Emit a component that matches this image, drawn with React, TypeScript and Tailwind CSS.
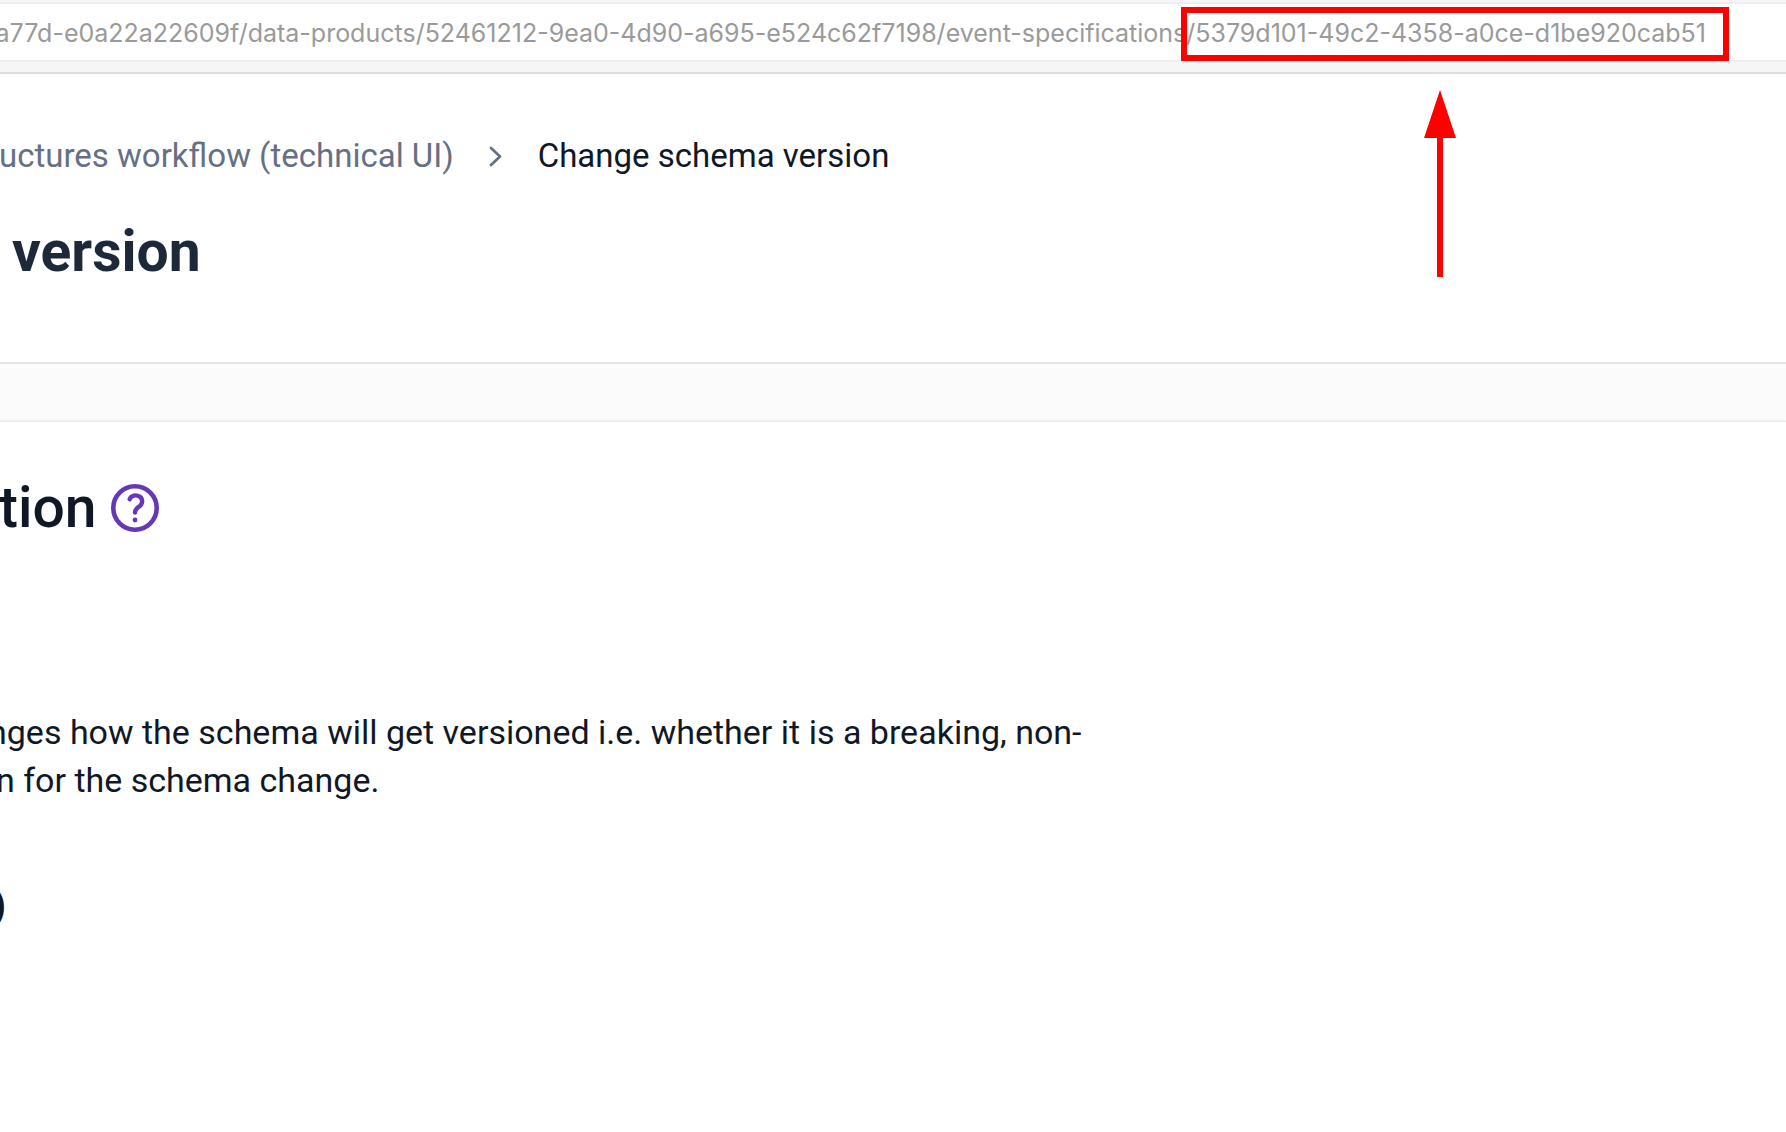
import React from "react";

const sans = "font-[Roboto,'Liberation_Sans',sans-serif]";

function AddressBar() {
  return (
    <div className="border-b-2 border-[#dddddd] bg-[#f6f6f6] pt-[2px] pb-[10px]">
      <div className="flex h-[60px] justify-end border-y-2 border-[#eeeeee] bg-white pr-[80px] font-[Inter,sans-serif] text-[25px] leading-[58px] whitespace-nowrap text-[#9a9a9a]">
        <span>a77d-e0a22a22609f/data-products/52461212-9ea0-4d90-a695-e524c62f7198/event-specifications</span>
        <span className="relative">
          /5379d101-49c2-4358-a0ce-d1be920cab51
          <span className="absolute top-[3px] -right-[23px] h-[54px] w-[548px] border-6 border-[#ff0000]" />
          <svg
            className="absolute top-[86px] right-[250px] h-[187px] w-8"
            viewBox="0 0 32 187"
            fill="#ff0000"
            aria-hidden="true"
          >
            <path d="M16 0 32 48H19v139h-6V48H0z" />
          </svg>
        </span>
      </div>
    </div>
  );
}

function PageHeader() {
  return (
    <header className="border-b-2 border-[#e5e5e5] bg-white pt-[58px] pb-[78px]">
      <nav aria-label="Breadcrumb" className="-ml-px flex items-center text-[33px] leading-[48px] whitespace-nowrap">
        <a href="#workflow" className="text-[#667085]">
          uctures workflow (technical UI)
        </a>
        <svg
          className="mr-[35px] ml-[33px] h-[24px] w-[16px]"
          viewBox="0 0 16 24"
          fill="none"
          stroke="#667085"
          strokeWidth="2.7"
          strokeLinecap="round"
          strokeLinejoin="round"
          aria-hidden="true"
        >
          <path d="M4 4l9 8.500-9 8.500" />
        </svg>
        <span aria-current="page" className="text-[#101828]">
          Change schema version
        </span>
      </nav>
      <h1 className="mt-[40px] ml-3 text-[57px] leading-[64px] font-bold text-[#1d2939]">version</h1>
    </header>
  );
}

function HelpIcon() {
  return (
    <svg className="size-12" viewBox="0 0 48 48" fill="none" stroke="#6638b8" strokeWidth="4.6" aria-hidden="true">
      <circle cx="24" cy="24" r="21.700" />
      <path
        d="M18.700 15.200C20 11.300 25.500 10.300 28.700 12.600C32.200 15.300 31.700 20 28.300 22.500C25.800 24.300 24 25 24 28.500"
        strokeLinecap="round"
        strokeWidth="4.400"
      />
      <circle cx="24" cy="36" r="2.400" fill="#6638b8" stroke="none" />
    </svg>
  );
}

export default function App() {
  return (
    <div className={`${sans} flex min-h-screen flex-col overflow-hidden bg-white`}>
      <AddressBar />
      <PageHeader />
      <div className="h-[57px] bg-[#fbfbfb]" />
      <main className="flex-1 border-t border-[#e9e9e9] pt-[54px] text-[#101828] shadow-[0_0_3px_rgba(0,0,0,0.1)]">
        <div className="-ml-px flex items-center gap-[14px]">
          <h2 className="text-[57px] leading-[64px] font-medium">tion</h2>
          <button type="button" aria-label="Help">
            <HelpIcon />
          </button>
        </div>
        <p className="mt-[168px] text-[34px] leading-[48px] whitespace-nowrap">
          <span className="-ml-3 block">nges how the schema will get versioned i.e. whether it is a breaking, non-</span>
          <span className="-ml-1 block">n for the schema change.</span>
        </p>
        <p className="mt-[74px] -ml-2 text-[40px] leading-[56px] font-bold">)</p>
      </main>
    </div>
  );
}
